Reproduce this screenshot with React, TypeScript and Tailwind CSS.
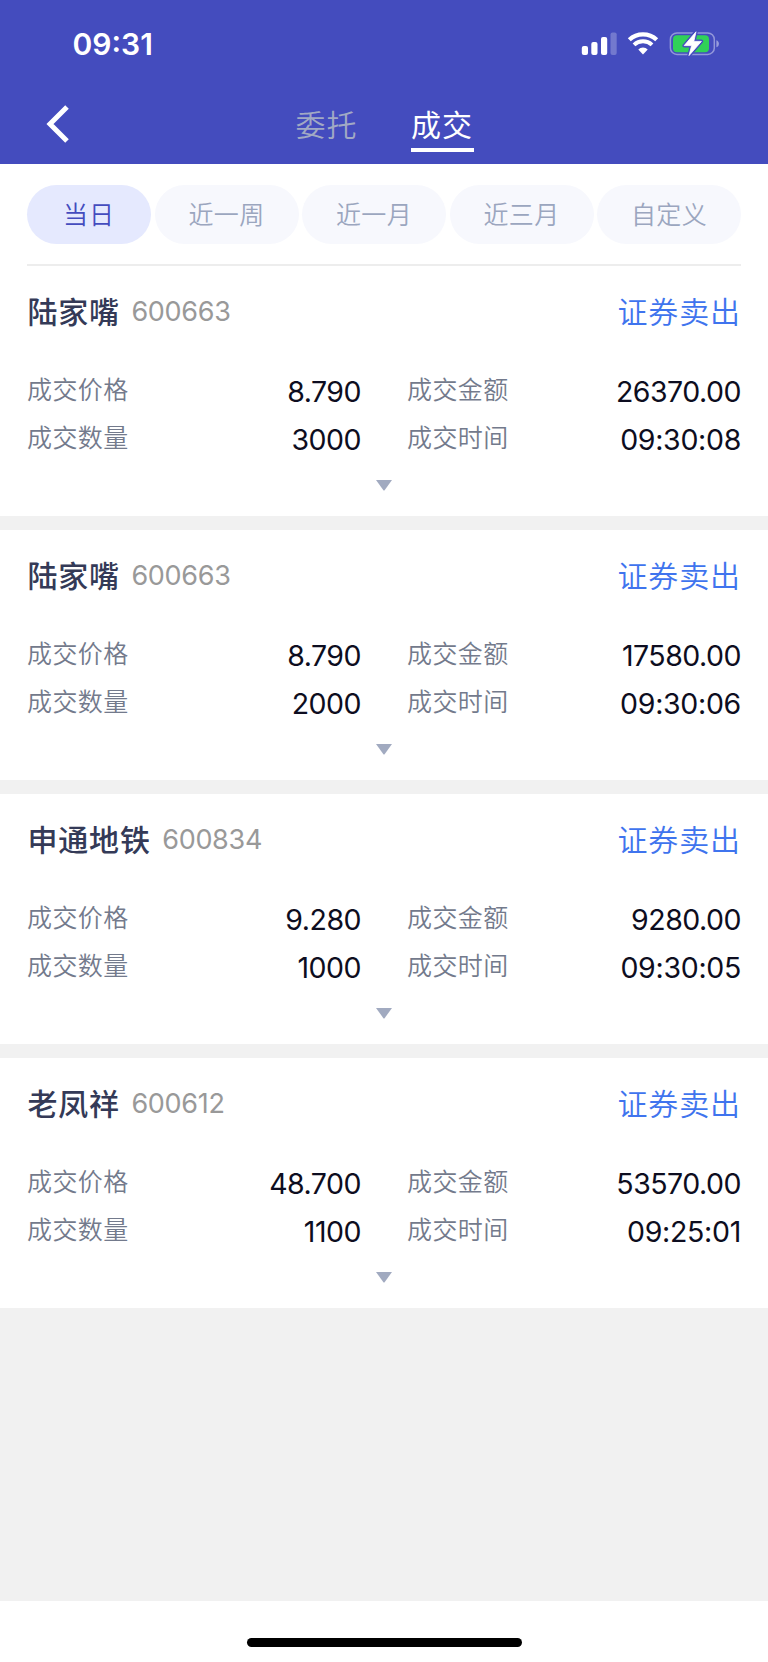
import { useState } from "react";

interface Deal {
	name: string;
	code: string;
	side: string;
	price: string;
	amount: string;
	count: string;
	time: string;
}

const deals: Deal[] = [
	{ name: "陆家嘴", code: "600663", side: "证券卖出", price: "8.790", amount: "26370.00", count: "3000", time: "09:30:08" },
	{ name: "陆家嘴", code: "600663", side: "证券卖出", price: "8.790", amount: "17580.00", count: "2000", time: "09:30:06" },
	{ name: "申通地铁", code: "600834", side: "证券卖出", price: "9.280", amount: "9280.00", count: "1000", time: "09:30:05" },
	{ name: "老凤祥", code: "600612", side: "证券卖出", price: "48.700", amount: "53570.00", count: "1100", time: "09:25:01" },
];

const ranges = ["当日", "近一周", "近一月", "近三月", "自定义"];

function StatusIcons() {
	return (
		<svg width="140" height="26" viewBox="0 0 140 26" fill="none">
			{/* signal */}
			<rect x="0.8" y="15" width="6.2" height="9" rx="2" fill="#fff" />
			<rect x="10.3" y="11" width="6.2" height="13" rx="2" fill="#fff" />
			<rect x="20" y="6" width="6.2" height="18" rx="2" fill="#fff" />
			<rect x="29.5" y="1.5" width="6.2" height="22.5" rx="2" fill="#fff" fillOpacity="0.25" />
			{/* wifi */}
			<path d="M48.3 8.8a20.1 20.1 0 0 1 27.4 0" stroke="#fff" strokeWidth="4.3" />
			<path d="M53 13.9a13.2 13.2 0 0 1 18 0" stroke="#fff" strokeWidth="4" />
			<path d="M57.3 18.5a6.8 6.8 0 0 1 9.4 0L62 23.6z" fill="#fff" />
			{/* battery */}
			<rect x="89.4" y="1.9" width="43.9" height="21.6" rx="6.6" stroke="#fff" strokeOpacity="0.42" strokeWidth="1.5" />
			<path d="M135.4 9.2c3.4 1 3.4 6 0 7z" fill="#fff" fillOpacity="0.45" />
			<rect x="92" y="4.2" width="36" height="17" rx="4" fill="#30d158" />
			<path d="M115 .8L103.2 14.6h7.4L108 24.6l12.4-14.2h-7.6z" fill="#fff" stroke="#444cbe" strokeWidth="3.6" strokeLinejoin="round" />
			<path d="M115 .8L103.2 14.6h7.4L108 24.6l12.4-14.2h-7.6z" fill="#fff" stroke="#fff" strokeWidth="0.8" strokeLinejoin="round" />
		</svg>
	);
}

function Field(props: { label: string; value: string }) {
	const isTime = props.value.includes(":");
	return (
		<div className="flex h-12 items-center justify-between">
			<span className="text-[25px] leading-none font-[350] tracking-[0.4px] text-[#737a8c]">{props.label}</span>
			<span className={`pt-[5px] text-[28.5px] leading-none text-[#0d0d20] ${isTime ? "tracking-[-0.3px]" : "tracking-[-0.5px]"}`}>
				{props.value}
			</span>
		</div>
	);
}

function DealCard({ deal }: { deal: Deal }) {
	return (
		<div className="h-[250px] bg-white px-[27px]">
			<div className="flex h-[91px] items-center">
				<span className="pl-[0.5px] text-[30px] leading-none font-medium tracking-[0.8px] text-[#343a57]">{deal.name}</span>
				<span className="ml-[11.5px] text-[27px] leading-none tracking-[-0.3px] text-[#999]">{deal.code}</span>
				<span className="ml-auto text-[30px] leading-none font-[350] tracking-[0.9px] text-[#3f74ee]">{deal.side}</span>
			</div>
			<div className="mt-[9px] grid grid-cols-2 gap-x-[46px]">
				<Field label="成交价格" value={deal.price} />
				<Field label="成交金额" value={deal.amount} />
				<Field label="成交数量" value={deal.count} />
				<Field label="成交时间" value={deal.time} />
			</div>
			<svg className="mx-auto mt-[18px] block" width="16" height="11" viewBox="0 0 16 11">
				<path d="M0 0h16L8.6 10.2q-.6.7-1.2 0z" fill="#a1aac0" />
			</svg>
		</div>
	);
}

export default function App() {
	const [range, setRange] = useState(0);
	return (
		<div className="flex h-[1662px] w-[768px] flex-col bg-[#f1f1f1] font-['Inter','Noto_Sans_CJK_SC',sans-serif]">
			<header className="h-[163.5px] bg-[#444cbe] text-white">
				<div className="flex h-[88px] items-center justify-between pl-[72.5px] pr-[47px]">
					<span className="text-[30px] leading-none font-semibold">09:31</span>
					<StatusIcons />
				</div>
				<div className="grid h-[75px] grid-cols-[295.5px_1fr] items-start">
					<svg className="ml-[46px] mt-[17px]" width="24" height="38" viewBox="0 0 24 38" fill="none">
						<path d="M21 2L4 19l17 17" stroke="#fff" strokeWidth="5" />
					</svg>
					<nav className="flex gap-[53.5px] pt-[22px] text-[30px] leading-none tracking-[1px]">
						<span className="font-[350] text-[#a1a9c4]">委托</span>
						<span className="h-[42px] w-[63px] border-b-4 border-white">成交</span>
					</nav>
				</div>
			</header>
			<div className="bg-white px-[27px]">
				<div className="flex h-[102.5px] justify-between border-b-2 border-[#ededed] pt-[21.5px]">
					{ranges.map((item, index) => (
						<button
							key={item}
							onClick={() => setRange(index)}
							className={`h-[59px] rounded-full pt-[2px] text-[25px] leading-none font-[350] ${index === 0 ? "w-[124px] tracking-[1px]" : "w-[144px] tracking-[0.4px]"} ${index === range ? "bg-[#e5e9fe] text-[#444cbe]" : "bg-[#f7f8fd] text-[#9ba6bf]"}`}
						>
							{item}
						</button>
					))}
				</div>
			</div>
			<main className="flex flex-col gap-[14px]">
				{deals.map((deal, index) => (
					<DealCard key={index} deal={deal} />
				))}
			</main>
			<footer className="mt-auto flex h-[61.5px] justify-center bg-white pt-[37.5px]">
				<div className="h-[9px] w-[275px] rounded-full bg-black" />
			</footer>
		</div>
	);
}
